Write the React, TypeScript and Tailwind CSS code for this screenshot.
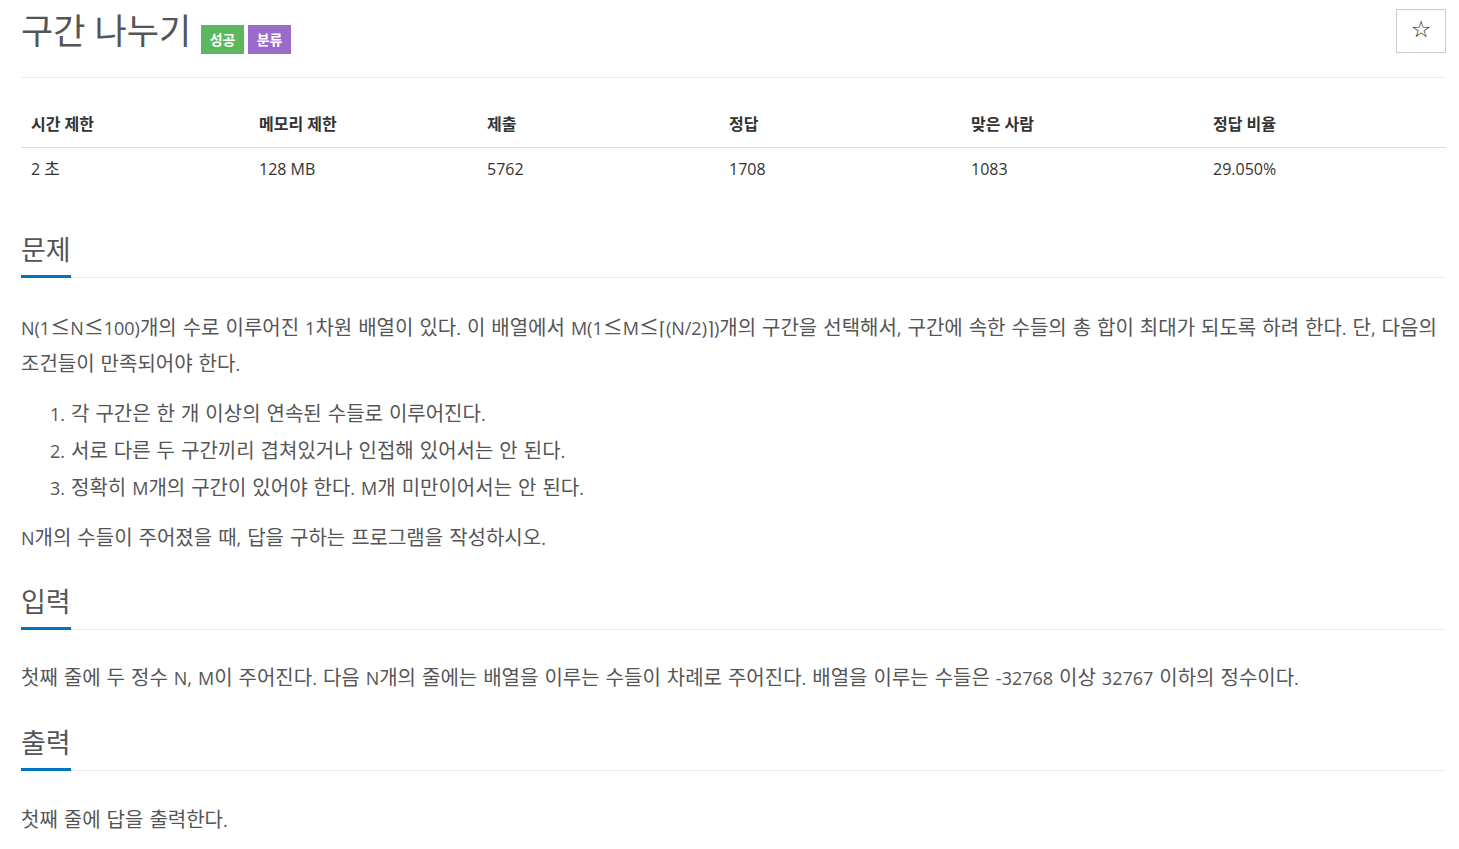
const stats = [
  { label: "시간 제한", value: "2 초" },
  { label: "메모리 제한", value: "128 MB" },
  { label: "제출", value: "5762" },
  { label: "정답", value: "1708" },
  { label: "맞은 사람", value: "1083" },
  { label: "정답 비율", value: "29.050%" },
]

const cols = "grid grid-cols-[228px_228px_242px_242px_242px_1fr]"

// hangul (and ≤) in the reference renders a bit larger than the latin text around it
const WIDE = /([\uac00-\ud7a3≤]+)/

function Ko({ text, className }: { text: string; className: string }) {
  return (
    <>
      {text.split(WIDE).map((part, i) =>
        i % 2 === 1 ? (
          <span key={i} className={className}>
            {part}
          </span>
        ) : (
          part
        )
      )}
    </>
  )
}

function Body({ text }: { text: string }) {
  return <Ko text={text} className="font-['Noto_Sans_CJK_KR'] text-[20px] leading-[20px]" />
}

function Headline({ title }: { title: string }) {
  return (
    <div className="border-b border-[#eee]">
      <h2 className="-mb-px inline-block border-b-[3px] border-[#0076c0] pb-[5px] text-[27px] leading-[40px] font-normal text-[#555]">
        {title}
      </h2>
    </div>
  )
}

export default function App() {
  return (
    <div
      className="min-h-screen bg-white pl-[21px] pr-[13px] pt-[9px] text-[#555]"
      style={{ fontFamily: '"Open Sans", "Noto Sans CJK KR", sans-serif' }}
    >
      <div className="flex items-start justify-between">
        <h1 className="flex items-start">
          <span className="text-[35px] leading-[44px] font-normal text-[#555]">구간 나누기</span>
          <span className="ml-[10px] mt-[16px] flex h-[29px] w-[43px] items-center justify-center bg-[#5cb85c] text-[14px] font-bold text-white">
            성공
          </span>
          <span className="ml-[4px] mt-[16px] flex h-[29px] w-[43px] items-center justify-center bg-[#9b6bcc] text-[14px] font-bold text-white">
            분류
          </span>
        </h1>
        <button className="flex h-[44px] w-[50px] items-center justify-center border border-[#ccc] bg-white">
          <span
            className="-mt-[4px] text-[23px] leading-none text-[#222]"
            style={{ fontFamily: '"DejaVu Sans", sans-serif' }}
          >
            ☆
          </span>
        </button>
      </div>

      <div className="mt-[23px] border-t border-[#eee]" />

      <div className="mt-[23px] text-[#333]">
        <div className={`${cols} border-b border-[#ddd]`}>
          {stats.map((s) => (
            <div key={s.label} className="px-[10px] py-[13px] text-[16px] leading-[20px] font-bold">
              {s.label}
            </div>
          ))}
        </div>
        <div className={cols}>
          {stats.map((s) => (
            <div key={s.label} className="px-[10px] pt-[11px] pb-[11px] text-[16px] leading-[20px]">
              <Ko text={s.value} className="text-[17px]" />
            </div>
          ))}
        </div>
      </div>

      <section className="mt-[40px]">
        <Headline title="문제" />
        <div className="mt-[32px] text-[18px] leading-[36px] [word-spacing:1.3px]">
          <p>
            <Body text="N(1≤N≤100)개의 수로 이루어진 1차원 배열이 있다. 이 배열에서 M(1≤M≤⌈(N/2)⌉)개의 구간을 선택해서, 구간에 속한 수들의 총 합이 최대가 되도록 하려 한다. 단, 다음의 조건들이 만족되어야 한다." />
          </p>
          <ol className="mt-[14px] mb-[13px] list-decimal pl-[50px] [&>li]:leading-[37px]">
            <li>
              <Body text="각 구간은 한 개 이상의 연속된 수들로 이루어진다." />
            </li>
            <li>
              <Body text="서로 다른 두 구간끼리 겹쳐있거나 인접해 있어서는 안 된다." />
            </li>
            <li>
              <Body text="정확히 M개의 구간이 있어야 한다. M개 미만이어서는 안 된다." />
            </li>
          </ol>
          <p>
            <Body text="N개의 수들이 주어졌을 때, 답을 구하는 프로그램을 작성하시오." />
          </p>
        </div>
      </section>

      <section className="mt-[26px]">
        <Headline title="입력" />
        <p className="mt-[30px] text-[18px] leading-[36px] [word-spacing:1.3px]">
          <Body text="첫째 줄에 두 정수 N, M이 주어진다. 다음 N개의 줄에는 배열을 이루는 수들이 차례로 주어진다. 배열을 이루는 수들은 -32768 이상 32767 이하의 정수이다." />
        </p>
      </section>

      <section className="mt-[27px]">
        <Headline title="출력" />
        <p className="mt-[31px] text-[18px] leading-[36px] [word-spacing:1.3px]">
          <Body text="첫째 줄에 답을 출력한다." />
        </p>
      </section>
    </div>
  )
}
